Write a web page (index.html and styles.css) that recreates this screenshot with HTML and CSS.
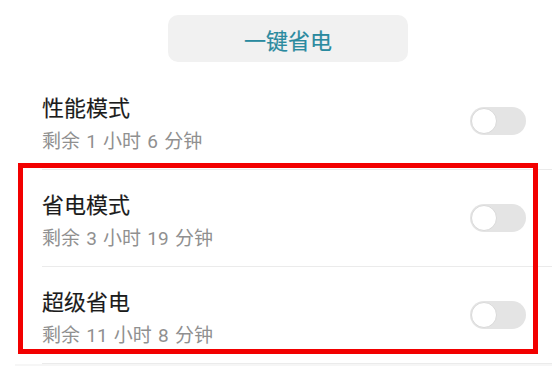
FILE: index.html
```html
<!DOCTYPE html>
<html lang="zh-CN">
<head>
<meta charset="utf-8">
<title>省电</title>
<link rel="stylesheet" href="styles.css">
</head>
<body>
<div class="page">
  <div class="header">
    <div class="save-btn">一键省电</div>
  </div>
  <div class="list">
    <div class="row">
      <div class="texts">
        <div class="title">性能模式</div>
        <div class="sub">剩余 1 小时 6 分钟</div>
      </div>
      <div class="toggle"><span class="thumb"></span></div>
    </div>
    <div class="row">
      <div class="texts">
        <div class="title">省电模式</div>
        <div class="sub">剩余 3 小时 19 分钟</div>
      </div>
      <div class="toggle"><span class="thumb"></span></div>
    </div>
    <div class="row">
      <div class="texts">
        <div class="title">超级省电</div>
        <div class="sub">剩余 11 小时 8 分钟</div>
      </div>
      <div class="toggle"><span class="thumb"></span></div>
    </div>
  </div>
  <div class="band"></div>
  <div class="highlight"></div>
</div>
</body>
</html>
```

FILE: styles.css
```css
html, body {
  margin: 0;
  padding: 0;
  background: #ffffff;
}
body {
  font-family: "Noto Sans CJK SC", "Noto Sans", sans-serif;
  width: 552px;
  height: 366px;
  overflow: hidden;
}
.page {
  position: relative;
  width: 552px;
  height: 366px;
}
.header {
  display: flex;
  padding-top: 15px;
  padding-left: 168px;
  height: 73px;
  box-sizing: border-box;
}
.save-btn {
  width: 240px;
  height: 47px;
  border-radius: 10px;
  background: #f1f1f1;
  color: #2a8a9f;
  font-size: 22px;
  -webkit-text-stroke: 0.2px #2a8a9f;
  display: flex;
  align-items: center;
  justify-content: center;
}
.list {
  display: flex;
  flex-direction: column;
}
.row {
  margin-left: 42px;
  padding-right: 26px;
  height: 97px;
  box-sizing: border-box;
  border-bottom: 1px solid #ebebeb;
  display: flex;
  align-items: center;
  justify-content: space-between;
}
.texts {
  display: flex;
  flex-direction: column;
  gap: 11px;
  padding-top: 5px;
}
.title {
  font-size: 22px;
  line-height: 26px;
  color: #1b1b1b;
  -webkit-text-stroke: 0.15px #1b1b1b;
}
.sub {
  font-family: "Roboto", "Noto Sans CJK SC", sans-serif;
  font-size: 19px;
  line-height: 24px;
  word-spacing: 1.5px;
  color: #909090;
}
.toggle {
  width: 56px;
  height: 28px;
  border-radius: 14px;
  background: #e4e4e4;
  display: flex;
  align-items: center;
  padding-left: 1px;
  box-sizing: border-box;
}
.thumb {
  width: 26px;
  height: 26px;
  border-radius: 50%;
  background: #ffffff;
  box-sizing: border-box;
  border: 1px solid #d9d9d9;
}
.band {
  height: 10px;
  margin-left: 15px;
  background: #f6f6f6;
}
.highlight {
  position: absolute;
  left: 18px;
  top: 163px;
  width: 520px;
  height: 191px;
  box-sizing: border-box;
  border: 5px solid #f20000;
}
```
